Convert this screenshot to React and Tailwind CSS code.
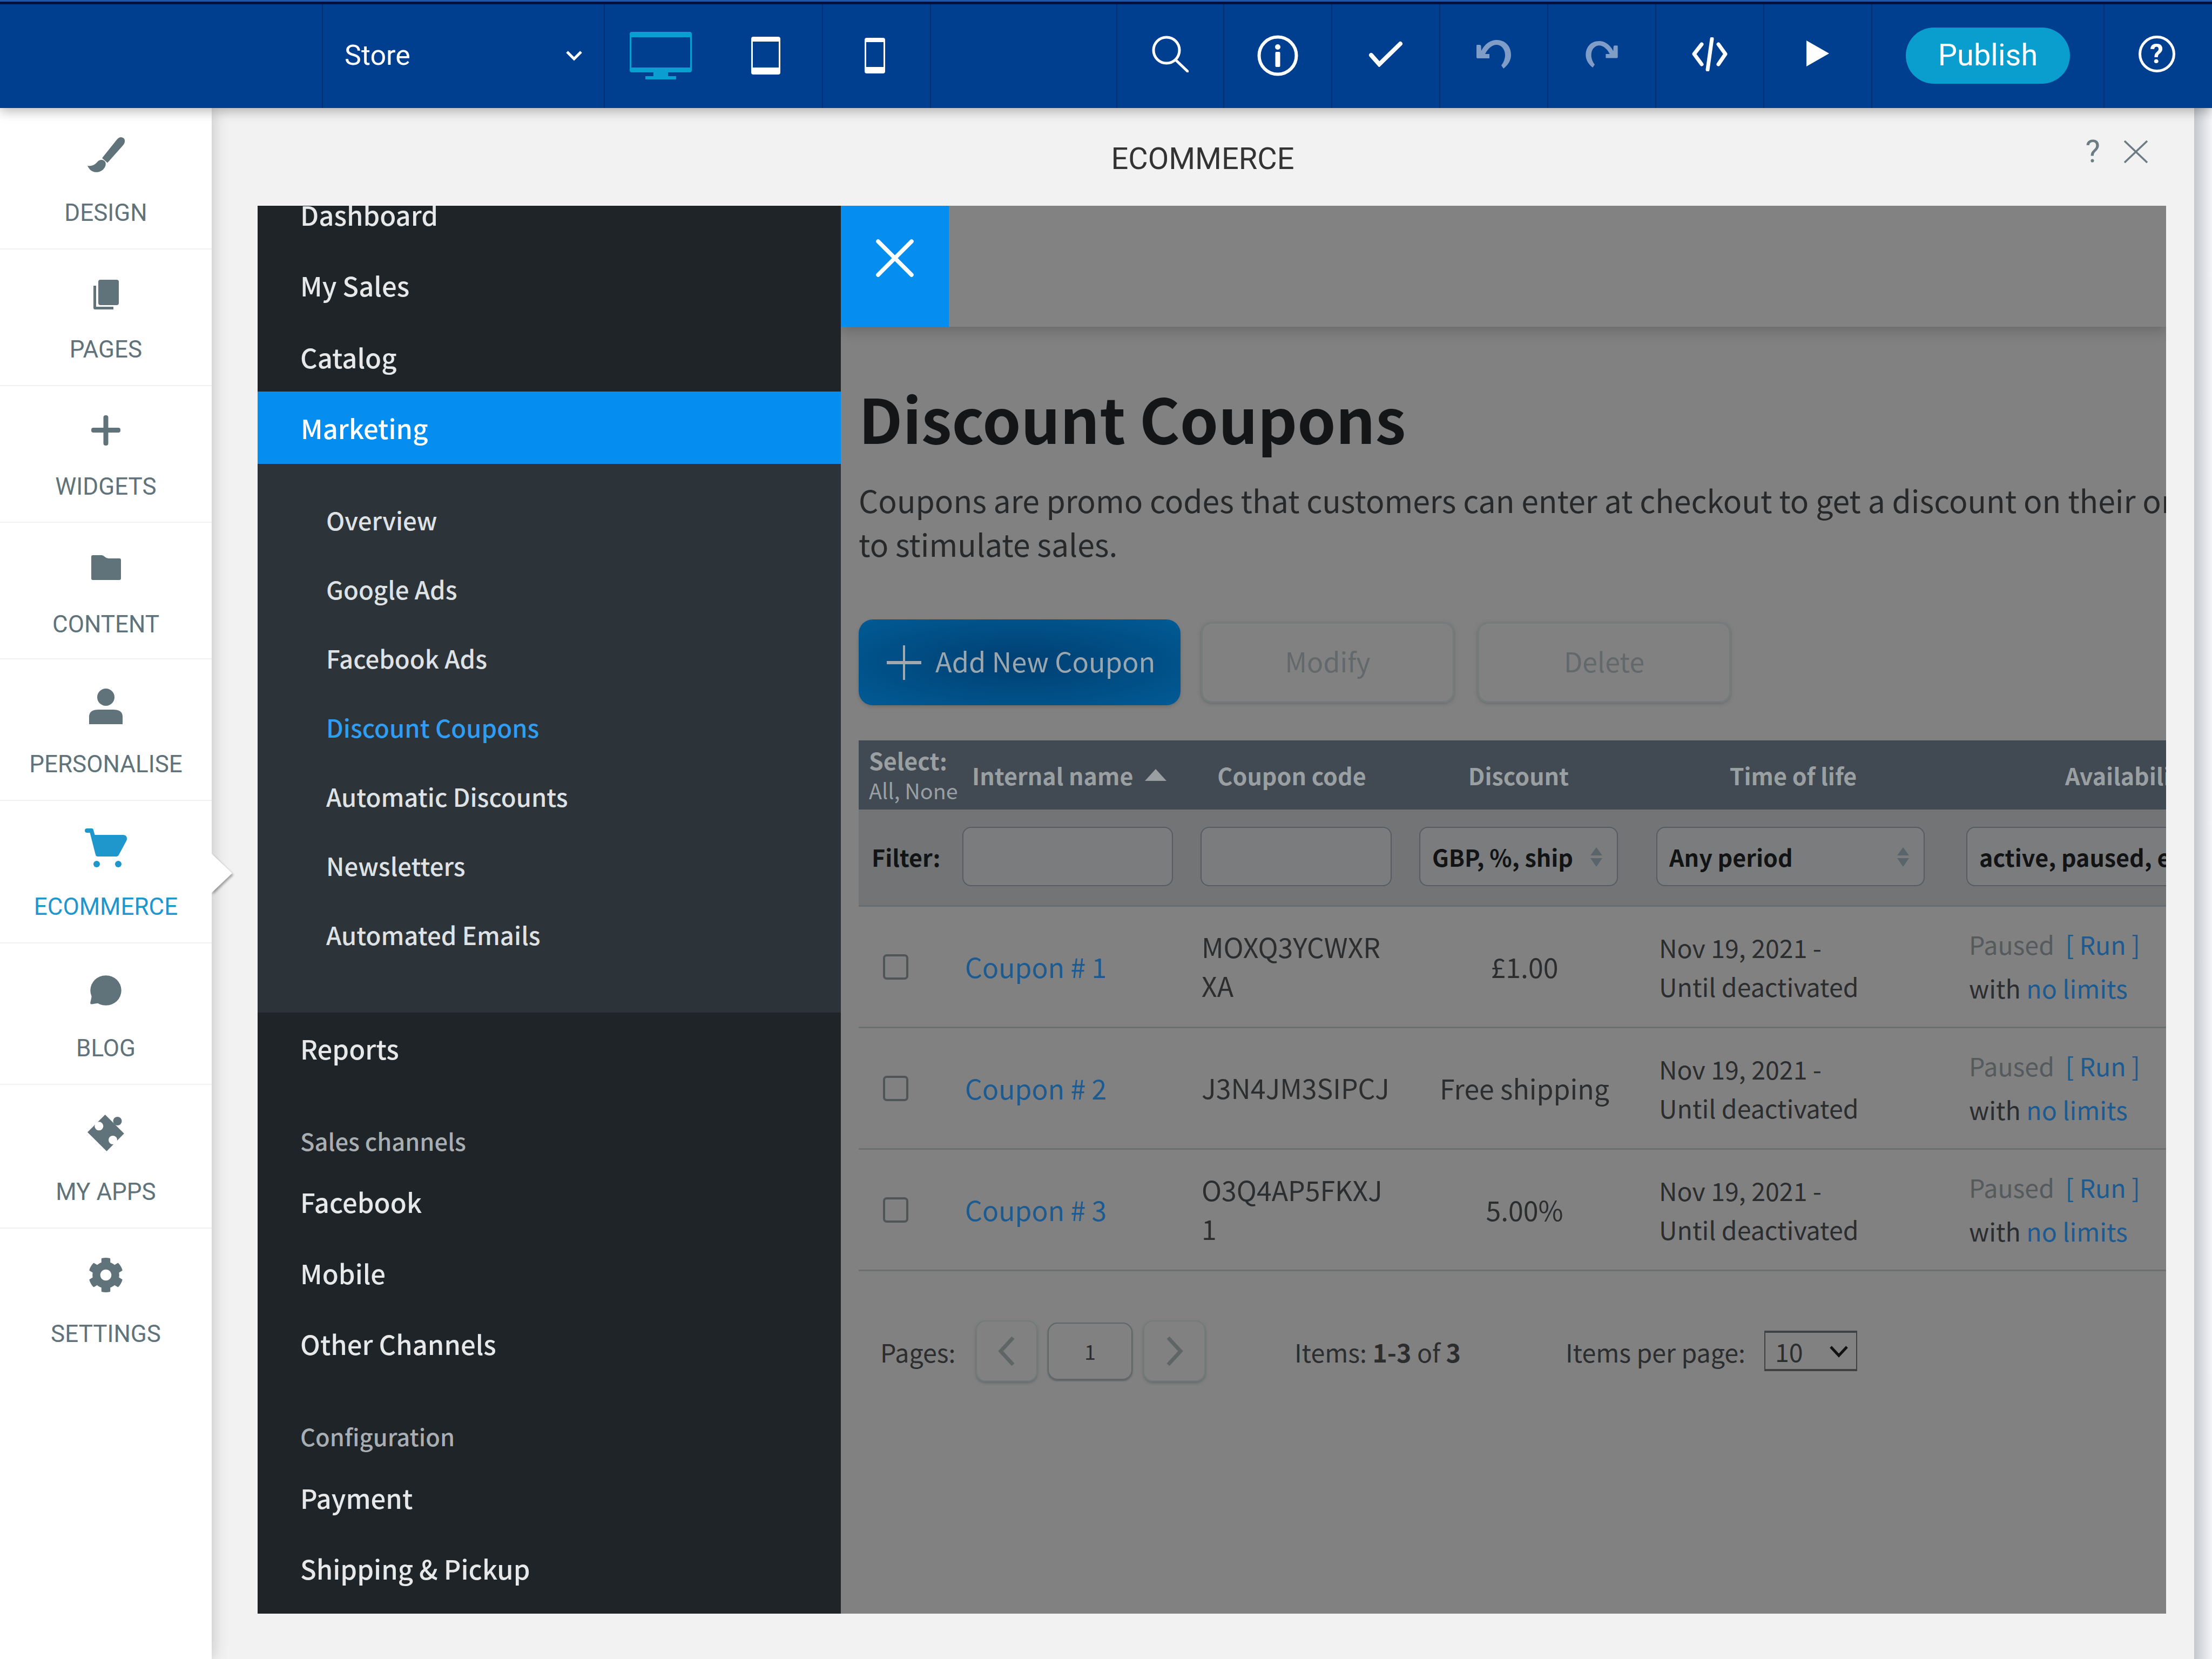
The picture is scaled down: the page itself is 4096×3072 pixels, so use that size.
import React from "react";
import { FaCog } from "react-icons/fa";

const grey = "#61737a";

const Brush = () => (
  <svg width="69" height="66" viewBox="0 0 69 66" fill={grey}>
    <path d="M54 5 Q58 0 62 0 Q70 1 69 9 Q68 13 65 16 L37 47.5 L27 38.7 Z" />
    <path d="M0 52.7 C8 55 15 50 19 45 C23 41 30 41 33 46 C36 52 30 62 22 64 C12 67 4 62 0 52.7 Z" />
  </svg>
);
const Pages = () => (
  <svg width="47" height="55" viewBox="0 0 47 55" fill={grey}>
    <rect x="9" y="0" width="38" height="47" rx="4" />
    <path d="M0 11 H5 V50 H37 V55 H3 Q0 55 0 52 Z" />
  </svg>
);
const Plus = () => (
  <svg width="54" height="56" viewBox="0 0 54 56" fill={grey}>
    <rect x="22.5" y="0" width="9" height="56" rx="4" />
    <rect x="0" y="23" width="54" height="9" rx="4" />
  </svg>
);
const Folder = () => (
  <svg width="55" height="46" viewBox="0 0 55 46" fill={grey}>
    <path d="M3 0 H19 Q22 0 25 3 Q28 6 32 6 H52 Q55 6 55 9 V43 Q55 46 52 46 H3 Q0 46 0 43 V3 Q0 0 3 0 Z" />
  </svg>
);
const Person = () => (
  <svg width="62" height="66" viewBox="0 0 62 66" fill={grey}>
    <circle cx="31" cy="16" r="16" />
    <path d="M0 66 V52 Q0 39 18 39 H44 Q62 39 62 52 V66 Z" />
  </svg>
);
const Cart = () => (
  <svg width="78" height="72" viewBox="0 0 78 72" fill="#1f96cc">
    <path d="M4 0 H13 Q15.5 0 16 3 L18.5 12 H71 Q78 12 78 19 Q78 21 77 23 L63 49 Q61.5 52 59 52 H24 Q21 52 20 49 L9.5 8 H4 Q0 8 0 4 Q0 0 4 0 Z" />
    <circle cx="22" cy="66" r="6" />
    <circle cx="62" cy="66" r="6" />
  </svg>
);
const Bubble = () => (
  <svg width="58" height="56" viewBox="0 0 58 56" fill={grey}>
    <ellipse cx="29" cy="28" rx="28.7" ry="27.8" />
    <path d="M3 38 L0.2 51 Q0 54 3 53.5 L18 51 Z" />
  </svg>
);
const Puzzle = () => (
  <svg width="68" height="68" viewBox="0 0 68 68">
    <circle cx="55.5" cy="12" r="8" fill={grey} />
    <polygon points="32.7,0 67.8,35 35.5,67.8 0,32.4" fill={grey} />
    <circle cx="21.3" cy="21.3" r="8" fill="#ffffff" />
    <circle cx="47" cy="47" r="8" fill="#ffffff" />
  </svg>
);

const navItems = [
  { label: "DESIGN", icon: <Brush />, box: "h-[262px] pt-[47px] border-b-2", gap: "mt-[40px]" },
  { label: "PAGES", icon: <Pages />, box: "h-[253px] pt-[43px] border-b-2", gap: "mt-[35px]" },
  { label: "WIDGETS", icon: <Plus />, box: "h-[253px] pt-[42px] border-b-2", gap: "mt-[37px]" },
  { label: "CONTENT", icon: <Folder />, box: "h-[253px] pt-[43px] border-b-2", gap: "mt-[38px]" },
  { label: "PERSONALISE", icon: <Person />, box: "h-[262px] pt-[47px] border-b-2", gap: "mt-[40px]" },
  { label: "ECOMMERCE", icon: <Cart />, box: "h-[264px] pt-[47px] border-b-2", gap: "mt-[42px]", active: true },
  { label: "BLOG", icon: <Bubble />, box: "h-[262px] pt-[47px] border-b-2", gap: "mt-[40px]" },
  { label: "MY APPS", icon: <Puzzle />, box: "h-[266px] pt-[49px] border-b-2", gap: "mt-[42px]" },
  { label: "SETTINGS", icon: <FaCog size={66} color={grey} />, box: "h-[262px] pt-[46px]", gap: "mt-[42px]" },
];

function Sidebar() {
  return (
    <aside className="relative z-10 w-[392px] shrink-0 bg-white shadow-[0_0_30px_rgba(0,0,0,0.22)]">
      {navItems.map((item) => (
        <div key={item.label} className={`relative flex flex-col items-center border-[#f0f1f1] ${item.box}`}>
          <div className="flex h-[80px] items-center justify-center">{item.icon}</div>
          <div className={`${item.gap} h-[54px] text-[44px] leading-[54px] ${item.active ? "text-[#1f96cc]" : "text-[#61737a]"}`}>
            {item.label}
          </div>
          {item.active && (
            <svg className="absolute left-[392px] top-[90px]" width="50" height="88" viewBox="0 0 50 88">
              <polygon points="0,8 38,44 0,80" fill="#ffffff" style={{ filter: "drop-shadow(2px 3px 2px rgba(0,0,0,0.35))" }} />
            </svg>
          )}
        </div>
      ))}
    </aside>
  );
}

const cellLine = "border-l-2 border-[#002f72]";
const undoPath = "M0 10 Q0 9 2 9 H6 Q8 9 8.5 11 L9 20 C16 6 27 0 37 0 C54 0 64 12 64 28 C64 38 58 47 50 53 L46 47 C50 42 53 35 53 28 C53 17 46 9 37 9 C29 9 21 16 16 26 H24 V34 H2 Q0 34 0 32 Z";

function TopBar() {
  const btn = `flex h-full w-[200px] items-center justify-center ${cellLine}`;
  return (
    <header className="relative z-20 h-[200px] shrink-0 bg-[#003e8f] text-white shadow-[0_6px_20px_rgba(0,0,0,0.28)]">
      <div className="h-[3px] bg-[#1b5aa8]" />
      <div className="h-[5px] bg-[#03122e]" />
      <div className="flex h-[192px] items-stretch">
        <div className="w-[596px]" />
        <div className={`flex w-[522px] items-center justify-between pl-[40px] pr-[40px] pb-[2px] ${cellLine}`}>
          <span className="text-[52px]">Store</span>
          <svg width="30" height="20" viewBox="0 0 30 20" fill="none" stroke="#fff" strokeWidth="5">
            <path d="M2 3 L15 16 L28 3" />
          </svg>
        </div>
        <div className={`flex w-[404px] items-center ${cellLine}`}>
          <svg className="ml-[46px] mb-[2px]" width="115" height="88" viewBox="0 0 115 88" fill="#0a9fd0">
            <path fillRule="evenodd" d="M4 0 H111 Q115 0 115 4 V71 Q115 75 111 75 H4 Q0 75 0 71 V4 Q0 0 4 0 Z M3 10 V66 H112 V10 Z" />
            <rect x="44" y="75" width="27" height="8" />
            <rect x="29" y="82" width="57" height="6" />
          </svg>
          <svg className="ml-[110px] mb-[2px]" width="54" height="70" viewBox="0 0 54 70" fill="#ffffff">
            <path fillRule="evenodd" d="M4 0 H50 Q54 0 54 4 V66 Q54 70 50 70 H4 Q0 70 0 66 V4 Q0 0 4 0 Z M3 9 V57 H51 V9 Z" />
          </svg>
        </div>
        <div className={`${btn} pr-[6px]`}>
          <svg className="mb-[2px]" width="38" height="66" viewBox="0 0 38 66" fill="#ffffff">
            <path fillRule="evenodd" d="M4 0 H34 Q38 0 38 4 V62 Q38 66 34 66 H4 Q0 66 0 62 V4 Q0 0 4 0 Z M3 8 V54 H35 V8 Z" />
          </svg>
        </div>
        <div className={`w-[345px] ${cellLine}`} />
        <div className={`flex h-full w-[198px] items-center justify-center ${cellLine}`}>
          <svg className="mb-[8px]" width="68" height="68" viewBox="0 0 68 68" fill="none" stroke="#fff" strokeWidth="5" strokeLinecap="round">
            <circle cx="27" cy="27" r="24" />
            <path d="M44 45 L66 66" />
          </svg>
        </div>
        <div className={btn}>
          <svg className="mb-[3px]" width="76" height="76" viewBox="0 0 76 76" fill="#fff">
            <circle cx="38" cy="38" r="34.5" fill="none" stroke="#fff" strokeWidth="6" />
            <circle cx="38" cy="22" r="5" />
            <rect x="33.5" y="31" width="9" height="28" rx="2" />
          </svg>
        </div>
        <div className={btn}>
          <svg className="mb-[8px]" width="64" height="48" viewBox="0 0 64 48" fill="none" stroke="#fff" strokeWidth="8" strokeLinecap="round">
            <path d="M5 26 L20 43 L59 5" />
          </svg>
        </div>
        <div className={btn}>
          <svg className="mb-[6px]" width="64" height="54" viewBox="0 0 64 54" fill="#7f9dc6">
            <path d={undoPath} />
          </svg>
        </div>
        <div className={btn}>
          <svg className="mb-[6px]" width="60" height="50" viewBox="0 0 64 54" fill="#7f9dc6">
            <path d={undoPath} transform="translate(64 0) scale(-1 1)" />
          </svg>
        </div>
        <div className={btn}>
          <svg className="mb-[8px]" width="66" height="63" viewBox="0 0 66 63" fill="none" stroke="#fff" strokeWidth="7" strokeLinecap="round" strokeLinejoin="round">
            <path d="M18 13 L4 31 L18 50" />
            <path d="M49 13 L62 31 L49 50" />
            <path d="M37 3 L29 60" />
          </svg>
        </div>
        <div className={btn}>
          <svg className="mb-[10px]" width="42" height="48" viewBox="0 0 42 48" fill="#fff">
            <polygon points="0,0 42,24 0,48" />
          </svg>
        </div>
        <div className={`flex w-[430px] items-center justify-center pb-[2px] ${cellLine}`}>
          <div className="flex h-[104px] w-[304px] items-center justify-center rounded-full bg-[#0a9ecf] text-[56px] pb-[2px]">Publish</div>
        </div>
        <div className={`flex flex-1 items-center justify-center pr-[6px] ${cellLine}`}>
          <div className="mb-[8px] flex h-[68px] w-[68px] items-center justify-center rounded-full border-[5px] border-white text-[50px] font-bold leading-none">?</div>
        </div>
      </div>
    </header>
  );
}

const menuRow = "flex items-center pb-[5px] pl-[79px] text-[#e6e8e9]";
const menuLabel = "flex h-[60px] items-center pl-[79px] text-[43.5px] text-[#a9aeb2]";

function Menu() {
  const subs = ["Overview", "Google Ads", "Facebook Ads", "Discount Coupons", "Automatic Discounts", "Newsletters", "Automated Emails"];
  return (
    <nav className="h-full w-[1080px] shrink-0 overflow-hidden bg-[#1e2428] text-[49px] font-medium">
      <div className="-mt-[46px]">
        <div className={`${menuRow} h-[129px]`}>Dashboard</div>
        <div className={`${menuRow} h-[132px]`}>My Sales</div>
        <div className="flex h-[129px] items-center pl-[79px] text-[#e6e8e9]">Catalog</div>
        <div className="flex h-[134px] items-center bg-[#058ef0] pl-[80px] text-white">Marketing</div>
        <div className="bg-[#2d3439] pb-[79px] pt-[41px] text-[45.5px]">
          {subs.map((s) => (
            <div key={s} className={`flex h-[128px] items-center pb-[4px] pl-[127px] ${s === "Discount Coupons" ? "text-[#2f9df2]" : "text-[#dfe2e4]"}`}>
              {s}
            </div>
          ))}
        </div>
        <div className={`${menuRow} h-[136px]`}>Reports</div>
        <div className={`${menuLabel} mt-[72px]`}>Sales channels</div>
        <div className={`${menuRow} mt-[17px] h-[135px]`}>Facebook</div>
        <div className={`${menuRow} h-[129px]`}>Mobile</div>
        <div className={`${menuRow} h-[132px]`}>Other Channels</div>
        <div className={`${menuLabel} mt-[74px]`}>Configuration</div>
        <div className={`${menuRow} mt-[19px] h-[132px]`}>Payment</div>
        <div className={`${menuRow} h-[130px]`}>Shipping &amp; Pickup</div>
      </div>
    </nav>
  );
}

const UpDown = () => (
  <svg className="absolute right-[27px] top-[36px]" width="22" height="36" viewBox="0 0 22 36" fill="#5a646b">
    <polygon points="11,0 22,15 0,15" />
    <polygon points="0,20 22,20 11,36" />
  </svg>
);

const rowCols = "grid grid-cols-[192px_441px_405px_439px_574px_700px]";
const fieldBox = "relative flex h-[110px] items-center rounded-[16px] border-2 border-[#565c61] bg-[#7b7c7d] pl-[22px] font-bold text-[43px] text-[#111315]";

const coupons = [
  { name: "Coupon # 1", code: ["MOXQ3YCWXR", "XA"], discount: "£1.00" },
  { name: "Coupon # 2", code: ["J3N4JM3SIPCJ"], discount: "Free shipping" },
  { name: "Coupon # 3", code: ["O3Q4AP5FKXJ", "1"], discount: "5.00%" },
];

function CouponTable() {
  return (
    <div className="mt-[65px] w-[2800px] text-[50px]">
      <div className={`${rowCols} h-[128px] items-center bg-[#414a52] text-[43px] text-[#9a9fa2]`}>
        <div className="whitespace-nowrap pl-[19px] leading-[56px]">
          <div className="font-bold">Select:</div>
          <div className="text-[39.5px] font-normal">All, None</div>
        </div>
        <div className="flex items-center pl-[18px] font-bold">
          Internal name
          <svg className="ml-[22px]" width="40" height="22" viewBox="0 0 40 22" fill="#9a9fa2">
            <polygon points="20,0 40,22 0,22" />
          </svg>
        </div>
        <div className="w-[354px] pr-[16px] text-center font-bold">Coupon code</div>
        <div className="w-[368px] text-center font-bold">Discount</div>
        <div className="w-[497px] pl-[10px] text-center font-bold">Time of life</div>
        <div className="pl-[183px] font-bold">Availability</div>
      </div>
      <div className={`${rowCols} h-[180px] items-start border-b-[3px] border-[#666d72] bg-[#727476] pt-[32px]`}>
        <div className="flex h-[110px] items-center pl-[24px] text-[43px] font-bold text-[#111315]">Filter:</div>
        <div className={`${fieldBox} w-[390px]`} />
        <div className={`${fieldBox} w-[354px]`} />
        <div className={`${fieldBox} w-[368px]`}>
          GBP, %, ship
          <UpDown />
        </div>
        <div className={`${fieldBox} w-[497px]`}>
          Any period
          <UpDown />
        </div>
        <div className={`${fieldBox} w-[700px] whitespace-nowrap`}>active, paused, expired</div>
      </div>
      {coupons.map((c) => (
        <div key={c.name} className={`${rowCols} h-[225px] items-center border-b-[3px] border-[#6c7070] leading-[72px] text-[#2b2d2f]`}>
          <div className="pl-[45px]">
            <div className="h-[47px] w-[47px] rounded-[7px] border-[4px] border-[#505558]" />
          </div>
          <div className="pb-[3px] pl-[5px] text-[#1c5a90]">{c.name}</div>
          <div className="whitespace-nowrap pb-[5px] pl-[2px]">
            {c.code.map((line) => (
              <div key={line}>{line}</div>
            ))}
          </div>
          <div className="w-[390px] whitespace-nowrap pb-[3px] text-center">{c.discount}</div>
          <div className="pl-[5px] text-[46.5px]">
            <div>Nov 19, 2021 -</div>
            <div>Until deactivated</div>
          </div>
          <div className="pb-[5px] pl-[5px] text-[46.5px] leading-[81px]">
            <div className="text-[#555a5d]">
              Paused <span className="ml-[10px] text-[#1c5a90]">[ Run ]</span>
            </div>
            <div>
              with <span className="text-[#1c5a90]">no limits</span>
            </div>
          </div>
        </div>
      ))}
    </div>
  );
}

const pagerBtn = "flex h-[113px] items-center justify-center rounded-[18px] border-2 border-[#747a7a] shadow-[0_3px_5px_rgba(80,90,90,0.6)]";

function Pager() {
  return (
    <div className="mt-[91px] flex h-[113px] items-center pl-[40px] text-[46.5px] text-[#2b2d2f]">
      <span className="w-[139px] pt-[3px]">Pages:</span>
      <div className={`${pagerBtn} ml-[38px] w-[114px]`}>
        <svg width="34" height="56" viewBox="0 0 34 56" fill="none" stroke="#5f6465" strokeWidth="7">
          <path d="M29 3 L6 28 L29 53" />
        </svg>
      </div>
      <div className="ml-[19px] flex h-[106px] w-[157px] items-center justify-center rounded-[18px] border-2 border-[#5e6668] text-[38px] shadow-[0_2px_3px_rgba(60,70,70,0.6)]">1</div>
      <div className={`${pagerBtn} ml-[20px] w-[115px]`}>
        <svg width="34" height="56" viewBox="0 0 34 56" fill="none" stroke="#5f6465" strokeWidth="7">
          <path d="M5 3 L28 28 L5 53" />
        </svg>
      </div>
      <span className="ml-[165px] w-[307px] whitespace-nowrap pt-[3px]">
        Items: <b>1-3</b> of <b>3</b>
      </span>
      <span className="ml-[195px] w-[368px] whitespace-nowrap pt-[3px]">Items per page:</span>
      <div className="flex h-[75px] w-[172px] items-center justify-between border-2 border-y-[4px] border-[#3f4142] pl-[18px] pr-[14px]">
        10
        <svg width="36" height="24" viewBox="0 0 36 24" fill="none" stroke="#111" strokeWidth="5">
          <path d="M3 4 L18 20 L33 4" />
        </svg>
      </div>
    </div>
  );
}

const ghostBtn = "flex h-[149px] w-[469px] items-center justify-center rounded-[20px] border-[3px] border-[#757b7b] pb-[6px] text-[#63686a] shadow-[0_2px_6px_rgba(80,90,90,0.55)]";

function CouponPage() {
  return (
    <section className="min-w-0 flex-1 overflow-hidden bg-[#818181]">
      <div className="flex h-[224px] bg-[#828282] shadow-[0_6px_24px_rgba(0,0,0,0.2)]">
        <div className="flex w-[200px] items-center justify-center bg-[#058ef0] pb-[30px]">
          <svg width="74" height="74" viewBox="0 0 74 74" fill="none" stroke="#fff" strokeWidth="7.5" strokeLinecap="round">
            <path d="M6 6 L68 68 M68 6 L6 68" />
          </svg>
        </div>
      </div>
      <div className="pl-[33px]">
        <h1 className="mt-[103px] text-[114px] font-bold leading-[130px] text-[#141517]">Discount Coupons</h1>
        <p className="mt-[47px] whitespace-nowrap text-[57px] leading-[81px] text-[#26282a]">
          Coupons are promo codes that customers can enter at checkout to get a discount on their order
          <br />
          to stimulate sales.
        </p>
        <div className="mt-[100px] flex items-center text-[50px]">
          <div className="flex h-[159px] w-[596px] items-center rounded-[26px] bg-[radial-gradient(ellipse_at_center,#003f72,#015b95)] pl-[52px] text-[#9aa7af] shadow-[0_3px_6px_rgba(0,0,0,0.15)]">
            <svg width="64" height="64" viewBox="0 0 64 64" fill="#a0aab0">
              <rect x="30" y="0" width="4" height="64" />
              <rect x="0" y="29" width="64" height="6" />
            </svg>
            <span className="ml-[26px] pb-[6px] text-[50.5px]">Add New Coupon</span>
          </div>
          <div className={`${ghostBtn} ml-[38px]`}>Modify</div>
          <div className={`${ghostBtn} ml-[43px]`}>Delete</div>
        </div>
        <CouponTable />
        <Pager />
      </div>
    </section>
  );
}

export default function App() {
  return (
    <div className="flex h-[3072px] w-[4096px] flex-col overflow-hidden bg-[#f2f2f2] font-['Roboto',sans-serif]">
      <TopBar />
      <div className="flex min-h-0 flex-1">
        <Sidebar />
        <main className="flex min-w-0 flex-1 flex-col pl-[85px] pr-[52px]">
          <div className="relative flex h-[181px] shrink-0 items-center justify-center pt-[6px] pr-[34px] text-[56px] text-[#333333]">
            ECOMMERCE
            <span className="absolute right-[122px] top-[46px] text-[58px] leading-[68px] text-[#6b7c83]">?</span>
            <svg className="absolute right-[34px] top-[60px]" width="44" height="42" viewBox="0 0 44 42" fill="none" stroke="#6b7c83" strokeWidth="3.5">
              <path d="M1 1 L43 41 M43 1 L1 41" />
            </svg>
          </div>
          <div className="flex h-[2607px] shrink-0 font-['Noto_Sans_CJK_JP',sans-serif]">
            <Menu />
            <CouponPage />
          </div>
        </main>
        <div className="w-[33px] shrink-0 bg-[linear-gradient(to_right,#c3c8cd,#f5f5f5)]" />
      </div>
    </div>
  );
}
